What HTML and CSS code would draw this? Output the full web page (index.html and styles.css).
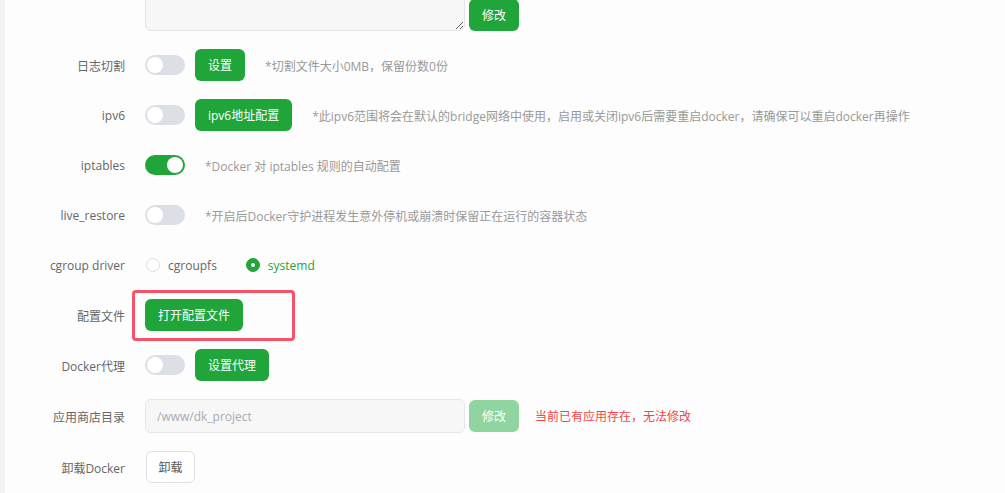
FILE: index.html
```html
<!DOCTYPE html>
<html lang="zh-CN">
<head>
<meta charset="utf-8">
<title>Docker 设置</title>
<link rel="stylesheet" href="styles.css">
</head>
<body>
<div class="page">
  <div class="form">
    <div class="row row-top">
      <div class="label"></div>
      <div class="field">
        <textarea class="textarea"></textarea>
        <button class="btn btn-green btn-tight">修改</button>
      </div>
    </div>

    <div class="row">
      <div class="label">日志切割</div>
      <div class="field">
        <span class="switch"><span class="knob"></span></span>
        <button class="btn btn-green ml10">设置</button>
        <span class="hint ml20">*切割文件大小0MB，保留份数0份</span>
      </div>
    </div>

    <div class="row">
      <div class="label">ipv6</div>
      <div class="field">
        <span class="switch"><span class="knob"></span></span>
        <button class="btn btn-green ml10">ipv6地址配置</button>
        <span class="hint ml20">*此ipv6范围将会在默认的bridge网络中使用，启用或关闭ipv6后需要重启docker，请确保可以重启docker再操作</span>
      </div>
    </div>

    <div class="row">
      <div class="label">iptables</div>
      <div class="field">
        <span class="switch on"><span class="knob"></span></span>
        <span class="hint ml20">*Docker 对 iptables 规则的自动配置</span>
      </div>
    </div>

    <div class="row">
      <div class="label">live_restore</div>
      <div class="field">
        <span class="switch"><span class="knob"></span></span>
        <span class="hint ml20">*开启后Docker守护进程发生意外停机或崩溃时保留正在运行的容器状态</span>
      </div>
    </div>

    <div class="row">
      <div class="label">cgroup driver</div>
      <div class="field">
        <label class="radio"><span class="radio-dot"></span><span class="radio-text">cgroupfs</span></label>
        <label class="radio checked"><span class="radio-dot"></span><span class="radio-text">systemd</span></label>
      </div>
    </div>

    <div class="row">
      <div class="label">配置文件</div>
      <div class="field">
        <span class="marked">
          <button class="btn btn-green">打开配置文件</button>
          <span class="mark"></span>
        </span>
      </div>
    </div>

    <div class="row">
      <div class="label">Docker代理</div>
      <div class="field">
        <span class="switch"><span class="knob"></span></span>
        <button class="btn btn-green ml10">设置代理</button>
      </div>
    </div>

    <div class="row">
      <div class="label">应用商店目录</div>
      <div class="field">
        <input class="input" type="text" value="/www/dk_project" disabled>
        <button class="btn btn-light btn-tight">修改</button>
        <span class="error">当前已有应用存在，无法修改</span>
      </div>
    </div>

    <div class="row">
      <div class="label">卸载Docker</div>
      <div class="field">
        <button class="btn btn-plain">卸载</button>
      </div>
    </div>
  </div>
</div>
</body>
</html>
```

FILE: styles.css
```css
html, body {
  margin: 0;
  padding: 0;
  height: 100%;
}
body {
  background: #fdfdfd;
  font-family: "Open Sans", "Noto Sans CJK SC", sans-serif;
  font-size: 12px;
  color: #666;
  overflow: hidden;
}
.page {
  display: flow-root;
  border-left: 5px solid #f2f2f2;
  min-height: 100%;
  box-sizing: border-box;
  background: #fdfdfd;
}
.form {
  display: flex;
  flex-direction: column;
  gap: 18px;
  padding-left: 20px;
  margin-top: -39px;
}
.row {
  display: flex;
  align-items: center;
  min-height: 32px;
}
.row-top {
  align-items: flex-end;
}
.label {
  width: 100px;
  margin-right: 20px;
  text-align: right;
  color: #666;
  white-space: nowrap;
  padding-top: 1px;
}
.field {
  display: flex;
  align-items: center;
  white-space: nowrap;
}
.row-top .field {
  align-items: flex-end;
}
.textarea {
  width: 320px;
  height: 70px;
  box-sizing: border-box;
  border: 1px solid #e2e4ea;
  border-radius: 6px;
  background: #f7f7f7;
  resize: vertical;
  padding: 6px 10px;
  margin: 0;
  font: inherit;
}
.btn {
  height: 32px;
  box-sizing: border-box;
  border: 1px solid transparent;
  border-radius: 6px;
  padding: 0 12px;
  font-family: inherit;
  font-size: 12px;
  cursor: pointer;
  margin: 0;
}
.btn-green {
  background: #20a53a;
  color: #fff;
}
.btn-light {
  background: #90d4a0;
  color: #fff;
  height: 32px;
}
.btn-tight {
  width: 50px;
  padding: 0;
  margin-left: 4px;
}
.btn-plain {
  background: #fff;
  color: #555;
  border-color: #dcdfe6;
  width: 49px;
  padding: 0;
  margin-left: 1px;
}
.ml10 { margin-left: 10px; }
.ml20 { margin-left: 20px; }
.hint {
  color: #999;
  padding-top: 1px;
}
.error {
  color: #f04848;
  margin-left: 16px;
}
.switch {
  position: relative;
  display: inline-block;
  width: 40px;
  height: 20px;
  border-radius: 10px;
  background: #dcdfe6;
}
.switch .knob {
  position: absolute;
  top: 2px;
  left: 2px;
  width: 16px;
  height: 16px;
  border-radius: 50%;
  background: #fff;
}
.switch.on {
  background: #20a53a;
}
.switch.on .knob {
  left: 22px;
}
.radio {
  display: inline-flex;
  align-items: center;
  margin-right: 28px;
  color: #666;
  margin-left: 1px;
}
.radio-dot {
  width: 12px;
  height: 12px;
  border: 1px solid #dcdfe6;
  border-radius: 50%;
  background: #fff;
  margin-right: 8px;
  position: relative;
}
.radio.checked .radio-dot {
  background: #20a53a;
  border-color: #20a53a;
}
.radio.checked .radio-dot::after {
  content: "";
  position: absolute;
  left: 4px;
  top: 4px;
  width: 4px;
  height: 4px;
  border-radius: 50%;
  background: #fff;
}
.radio.checked .radio-text {
  color: #20a53a;
}
.marked {
  position: relative;
  display: inline-flex;
}
.mark {
  position: absolute;
  left: -13px;
  top: -9px;
  width: 163px;
  height: 51px;
  box-sizing: border-box;
  border: 3px solid #f5536a;
  border-radius: 4px;
  pointer-events: none;
}
.input {
  width: 320px;
  height: 34px;
  box-sizing: border-box;
  border: 1px solid #e4e6ec;
  border-radius: 6px;
  background: #f7f7f7;
  color: #a8abb2;
  padding: 0 11px;
  font: inherit;
  margin: 0;
}
```
